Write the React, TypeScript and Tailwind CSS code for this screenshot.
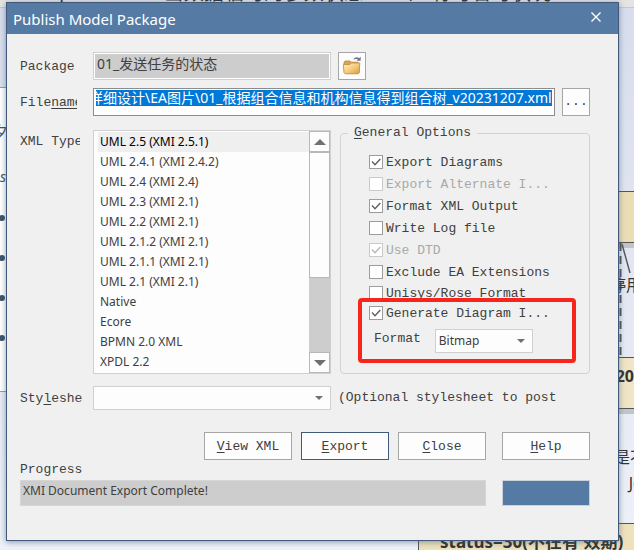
import { useEffect, useRef, useState } from "react";
import type { ReactNode } from "react";

const XML_TYPES = [
  "UML 2.5 (XMI 2.5.1)",
  "UML 2.4.1 (XMI 2.4.2)",
  "UML 2.4 (XMI 2.4)",
  "UML 2.3 (XMI 2.1)",
  "UML 2.2 (XMI 2.1)",
  "UML 2.1.2 (XMI 2.1)",
  "UML 2.1.1 (XMI 2.1)",
  "UML 2.1 (XMI 2.1)",
  "Native",
  "Ecore",
  "BPMN 2.0 XML",
  "XPDL 2.2",
];

const OPTIONS = [
  { label: "Export Diagrams", checked: true, disabled: false },
  { label: "Export Alternate I...", checked: false, disabled: true },
  { label: "Format XML Output", checked: true, disabled: false },
  { label: "Write Log file", checked: false, disabled: false },
  { label: "Use DTD", checked: true, disabled: true },
  { label: "Exclude EA Extensions", checked: false, disabled: false },
];

const LAST_OPTIONS = [
  { label: "Unisys/Rose Format", checked: false, disabled: false },
  { label: "Generate Diagram I...", checked: true, disabled: false },
];

type Option = { label: string; checked: boolean; disabled: boolean };

const ui = "font-['Noto_Sans','Noto_Sans_CJK_SC',sans-serif]";

function CheckOption({ option, tall }: { option: Option; tall: boolean }) {
  return (
    <label
      className={`flex items-center gap-[3px] ${tall ? "h-[22px]" : "h-5"} ${
        option.disabled ? "text-[#a8a8a8]" : "text-[#404040]"
      }`}
    >
      <span className="relative flex size-[14px] shrink-0">
        <input
          type="checkbox"
          defaultChecked={option.checked}
          disabled={option.disabled}
          className="peer size-[14px] appearance-none border border-[#9c9c9c] bg-white disabled:border-[#cacaca]"
        />
        <svg
          viewBox="0 0 14 14"
          className="pointer-events-none absolute inset-0 hidden size-[14px] peer-checked:block"
          fill="none"
          stroke={option.disabled ? "#b8b8b8" : "#606060"}
          strokeWidth="1.4"
        >
          <path d="M3 6.5 6 9.7 11.3 4" />
        </svg>
      </span>
      <span className="pt-[2px] leading-4 whitespace-pre">{option.label}</span>
    </label>
  );
}

function DialogButton({ first, rest, primary }: { first: string; rest: string; primary?: boolean }) {
  return (
    <button
      type="button"
      className={`h-7 w-[88px] border bg-[#fdfdfd] pt-[2px] ${primary ? "border-[#41597a]" : "border-[#a6a6a6]"}`}
    >
      <span className="underline underline-offset-2">{first}</span>
      {rest}
    </button>
  );
}

function Caret({ className = "" }: { className?: string }) {
  return (
    <svg viewBox="0 0 8 4" className={`pointer-events-none h-1 w-2 ${className}`} fill="#707070">
      <path d="M0 0h8L4 4z" />
    </svg>
  );
}

function FolderIcon() {
  return (
    <svg viewBox="0 0 20 20" className="size-5">
      <defs>
        <linearGradient id="folder" x1="0" y1="0" x2="1" y2="1">
          <stop offset="0" stopColor="#fff0c2" />
          <stop offset="0.5" stopColor="#f5cf80" />
          <stop offset="1" stopColor="#dc9c3e" />
        </linearGradient>
      </defs>
      <path d="M2 6.5 3 5h5l1.2 1.2H16L17 8v9H2.5z" fill="#dca552" stroke="#b98335" strokeWidth="0.8" />
      <path d="M1.3 8.5h6.5L9.2 7h8.6l-.6 9.6-1 1.2H3.2L2 16.6z" fill="url(#folder)" stroke="#c18a3c" strokeWidth="0.8" />
      <path d="M11.5 3.8C12.5 1 15.5.8 17 2.2L18.7.8v4h-4l1.3-1.2c-1-1-3-.9-4.5.2z" fill="#6b7685" />
    </svg>
  );
}

function Beige({ className, children }: { className: string; children?: ReactNode }) {
  return (
    <div className={`absolute right-0 border-t border-[#555] ${className}`}>{children}</div>
  );
}

/** The diagram editor that stays visible round the edges of the dialog. */
function DiagramBackdrop() {
  return (
    <div
      aria-hidden="true"
      className="absolute inset-0 overflow-hidden bg-linear-to-b from-[#d8dded] to-[#eef1f8] font-['Noto_Sans','Noto_Sans_CJK_SC',sans-serif] text-[#333]"
    >
      <div className="absolute inset-x-0 top-0 h-2 overflow-hidden border-b border-[#c8c8c8] bg-[#e4e4e4]">
        <span className="absolute -top-[21px] -left-1 text-[20px] leading-7 whitespace-pre">
          {"ort Page   三  02  _当数据临时的参数状态.三0个  有可若可状况"}
        </span>
      </div>
      <div className="absolute top-[87px] left-0 h-[305px] w-10 border-y border-[#999] bg-white">
        <span className="absolute top-8 -left-2 text-base text-[#3f5468]">夕</span>
        <span className="absolute top-[79px] left-0 text-sm leading-5 text-[#3f5468] italic">s</span>
        <ul className="absolute top-[127px] -left-px flex flex-col gap-[34px]">
          <li className="size-[6px] rounded-full bg-[#3f5468]" />
          <li className="size-[6px] rounded-full bg-[#3f5468]" />
          <li className="size-[6px] rounded-full bg-[#3f5468]" />
          <li className="size-[6px] rounded-full bg-[#3f5468]" />
        </ul>
      </div>
      <Beige className="top-[191px] h-[52px] w-10 border-b bg-[#ebdeb5]" />
      <div className="absolute top-[243px] right-0 h-[5px] w-10 bg-[#c3c4ca]" />
      <svg className="absolute top-[243px] right-0 h-[114px] w-4" viewBox="0 0 16 114" fill="none" stroke="#555">
        <path d="M2.5 0v114" strokeDasharray="8 5" strokeWidth="2" />
        <path d="M4 1l8 29" strokeWidth="1.4" />
      </svg>
      <span className="absolute top-[275px] -right-2 text-base leading-5">停用</span>
      <Beige className="top-[357px] h-[52px] w-10 border-b bg-[#f0e5c5]">
        <span className="absolute top-2 right-0 text-base leading-5 font-bold">20</span>
      </Beige>
      <div className="absolute top-[409px] right-0 h-[5px] w-10 bg-[#c3c4ca]" />
      <span className="absolute top-[447px] -right-3 text-base leading-5">是不</span>
      <span className="absolute top-[473px] -right-1 text-base leading-5">J(</span>
      <Beige className="top-[523px] bottom-0 w-[216px] border-l bg-[#eee1bb]">
        <span className="absolute top-2 left-[21px] text-[17px] leading-5 font-bold whitespace-pre">
          {"status=30(不在有 效期)"}
        </span>
      </Beige>
    </div>
  );
}

export default function App() {
  const [xmlType, setXmlType] = useState(0);
  const filename = useRef<HTMLInputElement>(null);

  // Keep the end of a long path in view.
  useEffect(() => {
    if (filename.current) filename.current.scrollLeft = filename.current.scrollWidth;
  }, []);

  return (
    <div className="relative min-h-screen overflow-hidden pt-[2px] pr-[15px] pb-2 pl-[6px]">
      <DiagramBackdrop />
      <main
        role="dialog"
        aria-labelledby="dialog-title"
        className="relative border border-[#41597a] bg-[#f0f0f0] pb-[34px] font-['Liberation_Mono','Noto_Sans_CJK_SC',monospace] text-[13px] leading-5 text-[#404040] shadow-[0_1px_6px_#41597a99]"
      >
        <header className="flex h-[31px] items-center justify-between bg-[#557ba5] pr-[14px] pl-[6px] text-white">
          <h1 id="dialog-title" className={`text-[15px] ${ui}`}>
            Publish Model Package
          </h1>
          <button type="button" aria-label="Close dialog" className="flex size-4 items-center justify-center pb-1">
            <svg viewBox="0 0 10 10" className="size-[10px]" fill="none" stroke="white" strokeWidth="1.4">
              <path d="M.5.5l9 9M9.5.5l-9 9" />
            </svg>
          </button>
        </header>

        <form className="pt-[18px] pr-7 pl-[13px]" onSubmit={(e) => e.preventDefault()}>
          <div className="grid grid-cols-[73px_238fr_259fr] items-center">
            <label htmlFor="package" className="pt-[2px]">
              Package
            </label>
            <div className="h-7 border border-[#d0d0d0] bg-white p-px">
              <div className="h-full bg-[#cdcdcd] px-[2px]">
                <input
                  id="package"
                  readOnly
                  defaultValue="01_发送任务的状态"
                  className={`block h-5 w-full bg-transparent text-[14px] leading-5 outline-none ${ui}`}
                />
              </div>
            </div>
            <button
              type="button"
              aria-label="Browse package"
              className="ml-[7px] flex size-7 items-center justify-center border border-[#a6a6a6] bg-[#fdfdfd]"
            >
              <FolderIcon />
            </button>
          </div>

          <div className="mt-2 flex items-center">
            <div className="w-[73px] shrink-0 pt-[2px]">
              <label htmlFor="filename" className="block w-[57px] overflow-hidden">
                File<span className="underline underline-offset-2">name</span>
              </label>
            </div>
            <div className="h-7 min-w-0 flex-1 border border-[#8c8c8c] bg-white px-[2px] pt-px">
              <input
                id="filename"
                ref={filename}
                defaultValue="详细设计\EA图片\01_根据组合信息和机构信息得到组合树_v20231207.xml"
                className={`block h-4 w-full bg-[#0078d7] text-[14px] leading-4 text-white outline-none ${ui}`}
              />
            </div>
            <button type="button" aria-label="Browse file" className="ml-[7px] size-7 border border-[#a6a6a6] bg-[#fdfdfd]">
              ...
            </button>
          </div>

          <div className="mt-[14px] grid grid-cols-[73px_238fr_259fr]">
            <div id="xml-type" className="w-[60px] overflow-hidden pt-[2px] whitespace-nowrap">
              XML Type
            </div>
            <div className="flex border border-[#d0d0d0] bg-[#fdfdfd]">
              <ul role="listbox" aria-labelledby="xml-type" className={`min-w-0 flex-1 py-px pl-1 text-[12px] ${ui}`}>
                {XML_TYPES.map((name, i) => (
                  <li
                    key={name}
                    role="option"
                    aria-selected={i === xmlType}
                    onClick={() => setXmlType(i)}
                    className="h-5 pl-[2px] leading-5 aria-selected:bg-[#efefef] aria-selected:text-black"
                  >
                    {name}
                  </li>
                ))}
              </ul>
              <div className="flex w-[21px] flex-col bg-[#cdcdcd]">
                <button
                  type="button"
                  aria-label="Scroll up"
                  className="flex h-[21px] items-center justify-center border border-[#b8b8b8] bg-[#fdfdfd]"
                >
                  <svg viewBox="0 0 12 6" className="h-[6px] w-3" fill="#707070">
                    <path d="M6 0l6 6H0z" />
                  </svg>
                </button>
                <div className="h-[126px] border border-[#b8b8b8] bg-[#fdfdfd]" />
                <button
                  type="button"
                  aria-label="Scroll down"
                  className="mt-auto flex h-[21px] items-center justify-center border border-[#b8b8b8] bg-[#fdfdfd]"
                >
                  <svg viewBox="0 0 12 6" className="h-[6px] w-3" fill="#707070">
                    <path d="M0 0h12L6 6z" />
                  </svg>
                </button>
              </div>
            </div>

            <fieldset className="relative -mt-[7px] ml-[9px] rounded border border-[#d3d3d3] pl-7">
              <legend className="-ml-[21px] px-[6px]">
                <span className="underline underline-offset-2">G</span>eneral Options
              </legend>
              <div className="pt-2">
                {OPTIONS.map((o) => (
                  <CheckOption key={o.label} option={o} tall />
                ))}
                {LAST_OPTIONS.map((o) => (
                  <CheckOption key={o.label} option={o} tall={false} />
                ))}
              </div>
              <div className="mt-[6px] flex gap-[14px] pl-[5px]">
                <label htmlFor="format">Format</label>
                <div className="relative">
                  <select
                    id="format"
                    className={`block h-6 w-[98px] appearance-none border border-[#d0d0d0] bg-[#fdfdfd] pl-[3px] text-[12px] leading-5 ${ui}`}
                  >
                    <option>Bitmap</option>
                  </select>
                  <Caret className="absolute top-[10px] right-2" />
                </div>
              </div>
              <div className="pointer-events-none absolute right-[13px] bottom-[10px] left-[17px] h-[65px] rounded border-4 border-[#f8251c]" />
            </fieldset>
          </div>

          <div className="mt-3 grid grid-cols-[73px_238fr_259fr] items-center">
            <label htmlFor="stylesheet" className="pt-[2px]">
              Sty<span className="underline underline-offset-2">l</span>eshe
            </label>
            <div className="relative">
              <select
                id="stylesheet"
                className="block h-6 w-full appearance-none border border-[#d0d0d0] bg-[#fdfdfd]"
              />
              <Caret className="absolute top-[10px] right-2" />
            </div>
            <span className="pl-[7px] whitespace-nowrap">(Optional stylesheet to post</span>
          </div>

          <div className="mt-[22px] flex justify-end gap-[9px]">
            <DialogButton first="V" rest="iew XML" />
            <DialogButton first="E" rest="xport" primary />
            <DialogButton first="C" rest="lose" />
            <div className="pl-[7px]">
              <DialogButton first="H" rest="elp" />
            </div>
          </div>

          <div id="progress-label">Progress</div>
          <div className="flex gap-4">
            <output
              aria-labelledby="progress-label"
              className={`h-[26px] flex-1 border border-[#d6d6d6] bg-[#cdcdcd] pl-[2px] text-[12px] ${ui}`}
            >
              XMI Document Export Complete!
            </output>
            <div
              role="progressbar"
              aria-labelledby="progress-label"
              aria-valuenow={100}
              className="h-[26px] w-[88px] border border-[#ccd2da] bg-[#557ba5]"
            />
          </div>
        </form>
      </main>
    </div>
  );
}
